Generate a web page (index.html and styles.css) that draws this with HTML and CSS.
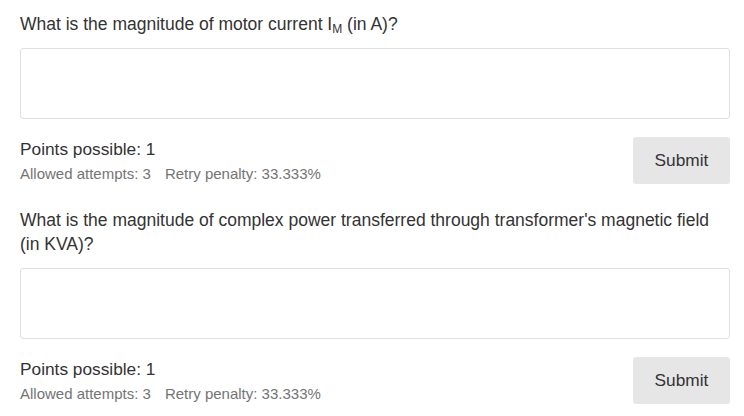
FILE: index.html
```html
<!DOCTYPE html>
<html>
<head>
<meta charset="utf-8">
<link rel="stylesheet" href="styles.css">
</head>
<body>
<div class="problems">
  <div class="problem">
    <p class="question">What is the magnitude of motor current I<sub>M</sub> (in A)?</p>
    <input class="answer" type="text">
    <div class="footer">
      <div class="meta">
        <div class="points">Points possible: 1</div>
        <div class="attempts"><span>Allowed attempts: 3</span><span>Retry penalty: 33.333%</span></div>
      </div>
      <button class="submit">Submit</button>
    </div>
  </div>
  <div class="problem">
    <p class="question">What is the magnitude of complex power transferred through transformer's magnetic field (in KVA)?</p>
    <input class="answer" type="text">
    <div class="footer">
      <div class="meta">
        <div class="points">Points possible: 1</div>
        <div class="attempts"><span>Allowed attempts: 3</span><span>Retry penalty: 33.333%</span></div>
      </div>
      <button class="submit">Submit</button>
    </div>
  </div>
</div>
</body>
</html>
```
FILE: styles.css
```css
html, body {
  margin: 0;
  padding: 0;
  background: #ffffff;
}
body {
  font-family: "Liberation Sans", Arial, sans-serif;
  color: #333333;
}
.problems {
  padding: 12px 14px 0 20px;
  display: flex;
  flex-direction: column;
  gap: 24px;
}
.problem {
  display: flex;
  flex-direction: column;
}
.question {
  margin: 0;
  font-size: 17.5px;
  line-height: 24px;
  color: #333333;
}
.question sub {
  font-size: 12px;
  line-height: 0;
  vertical-align: -3px;
}
.answer {
  box-sizing: border-box;
  margin: 12px 0 0 0;
  height: 71px;
  width: 100%;
  border: 1px solid #e0e0e0;
  border-radius: 3px;
  background: #ffffff;
  font: inherit;
  padding: 0 10px;
}
.footer {
  margin-top: 18px;
  display: flex;
  justify-content: space-between;
  align-items: flex-start;
}
.meta {
  display: flex;
  flex-direction: column;
}
.points {
  font-size: 17.3px;
  line-height: 24px;
  color: #333333;
}
.attempts {
  margin-top: 2px;
  font-size: 15px;
  line-height: 21px;
  color: #747474;
  display: flex;
  gap: 14px;
}
.submit {
  width: 97px;
  height: 47px;
  border: none;
  border-radius: 3px;
  background: #e6e6e6;
  color: #333333;
  font-family: "Liberation Sans", Arial, sans-serif;
  font-size: 17.3px;
  padding: 0;
}
```
